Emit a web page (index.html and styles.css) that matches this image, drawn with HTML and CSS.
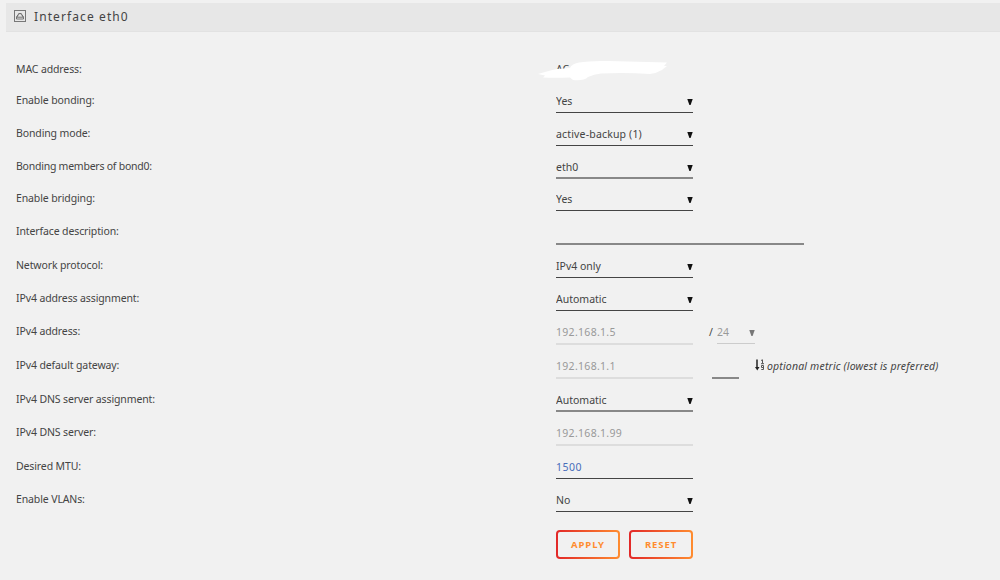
FILE: index.html
```html
<!DOCTYPE html>
<html lang="en">
<head>
    <meta charset="UTF-8">
    <title>Interface eth0</title>
    <link rel="stylesheet" href="styles.css">
</head>
<body>
    <div class="title">
        <svg class="title-icon" viewBox="0 0 12 12" width="12" height="12">
            <rect x="0.5" y="0.5" width="11" height="11" fill="none" stroke="#777"/>
            <path d="M2.500 9V6.500H3.500V5H4.700V3.500H7.300V5H8.500V6.500H9.500V9ZM3 7.200H9" fill="none" stroke="#666" stroke-width="0.900"/>
        </svg>
        <h1>Interface eth0</h1>
    </div>

    <form class="settings">
        <div class="row">
            <span class="label mac-label">MAC address:</span>
            <div class="mac">
                <span>AC</span>
                <svg class="mac-cover" viewBox="0 0 132 22" width="132" height="22">
                    <path d="M0 14L7 12Q14 10 19 9L32 8Q33 4 41 2.500Q52 0.500 70 1L129 2.500L126 6H129L124 10Q119 13 112 14Q88 12.500 63 13.500Q56 14 50 17Q46 21 35 20L32 17.500Q16 18 5 17.500L7 15.500Z" fill="#fff"/>
                </svg>
            </div>
        </div>
        <div class="row">
            <label class="label" for="bonding">Enable bonding:</label>
            <div class="select"><select id="bonding"><option>Yes</option></select></div>
        </div>
        <div class="row">
            <label class="label" for="mode">Bonding mode:</label>
            <div class="select spaced"><select id="mode"><option>active-backup (1)</option></select></div>
        </div>
        <div class="row">
            <label class="label tight" for="members">Bonding members of bond0:</label>
            <div class="select soft"><select id="members"><option>eth0</option></select></div>
        </div>
        <div class="row bridging">
            <label class="label" for="bridging">Enable bridging:</label>
            <div class="select"><select id="bridging"><option>Yes</option></select></div>
        </div>
        <div class="row">
            <label class="label" for="description">Interface description:</label>
            <input class="wide soft" id="description" type="text">
        </div>
        <div class="row">
            <label class="label" for="protocol">Network protocol:</label>
            <div class="select"><select id="protocol"><option>IPv4 only</option></select></div>
        </div>
        <div class="row">
            <label class="label" for="assignment">IPv4 address assignment:</label>
            <div class="select"><select id="assignment"><option>Automatic</option></select></div>
        </div>
        <div class="row">
            <label class="label" for="address">IPv4 address:</label>
            <input id="address" type="text" value="192.168.1.5" disabled>
            <span class="slash">/</span>
            <div class="select mask disabled"><select disabled><option>24</option></select></div>
        </div>
        <div class="row">
            <label class="label" for="gateway">IPv4 default gateway:</label>
            <input id="gateway" type="text" value="192.168.1.1" disabled>
            <input class="metric soft" type="text">
            <svg class="sort-icon" viewBox="0 0 10 12" width="10" height="12">
                <path d="M2 0.500V9" stroke="#222" stroke-width="1.500"/>
                <path d="M0 8h4.500l-2.250 3.500z" fill="#222"/>
                <path d="M6 1.500L7.500 0.800V4.500M6 4.700H9M8.500 8.500H6.500V6.500H8.500V10.500H6.300" fill="none" stroke="#555"/>
            </svg>
            <em class="hint">optional metric (lowest is preferred)</em>
        </div>
        <div class="row">
            <label class="label" for="dns-assignment">IPv4 DNS server assignment:</label>
            <div class="select soft"><select id="dns-assignment"><option>Automatic</option></select></div>
        </div>
        <div class="row">
            <label class="label" for="dns">IPv4 DNS server:</label>
            <input id="dns" type="text" value="192.168.1.99" disabled>
        </div>
        <div class="row">
            <label class="label" for="mtu">Desired MTU:</label>
            <input class="mtu" id="mtu" type="text" value="1500">
        </div>
        <div class="row">
            <label class="label" for="vlans">Enable VLANs:</label>
            <div class="select"><select id="vlans"><option>No</option></select></div>
        </div>
        <div class="buttons">
            <button type="button">Apply</button>
            <button type="reset">Reset</button>
        </div>
    </form>
</body>
</html>
```
FILE: styles.css
```css
* {
    box-sizing: border-box;
}

body {
    margin: 0;
    padding: 3px 0 0 6px;
    height: 580px;
    overflow: hidden;
    background: #f1f1f1;
    color: #444;
    font-family: "Noto Sans", sans-serif;
    font-size: 10.5px;
}

.title {
    display: flex;
    align-items: center;
    height: 29px;
    padding: 0 0 2px 8px;
    background: #e7e7e7;
    border-bottom: 1px solid #e2e2e2;
}

.title-icon {
    margin-right: 8px;
}

.title h1 {
    margin: 0;
    padding-top: 1px;
    font-size: 12px;
    font-weight: normal;
    letter-spacing: 1.1px;
    color: #444;
}

.settings {
    display: grid;
    grid-template-rows: 33px 33px 33px 33px 32px 34px 33px 33px 34px 34px 33px 34px 33px 33px;
    padding: 15px 0 0 10px;
}

.row {
    display: flex;
    align-items: stretch;
}

.label {
    width: 540px;
    padding-top: 12px;
    line-height: 16px;
    letter-spacing: -0.12px;
}

.tight {
    letter-spacing: -0.24px;
}

.mac-label {
    padding-top: 14px;
}

.mac {
    position: relative;
    padding-top: 14px;
    line-height: 16px;
}

.mac-cover {
    position: absolute;
    left: -18px;
    top: 13px;
}

input,
.select {
    width: 137px;
    height: 100%;
    padding: 10px 0 0;
    border: 0;
    border-bottom: 1px solid #444;
    border-radius: 0;
    background: transparent;
    color: #444;
    font: inherit;
}

.select {
    position: relative;
}

.select::after {
    content: "";
    position: absolute;
    right: 0;
    top: 19px;
    width: 6px;
    height: 6px;
    background: #111;
    clip-path: polygon(5% 0, 95% 0, 60% 100%, 40% 100%);
}

select {
    display: block;
    width: 100%;
    height: 22px;
    padding: 0;
    border: 0;
    appearance: none;
    background: transparent;
    color: inherit;
    font: inherit;
    letter-spacing: inherit;
}

.spaced {
    letter-spacing: 0.17px;
}

.soft {
    border-bottom: 2px solid #888;
}

input:disabled {
    border-bottom: 2px solid #ddd;
    color: #999;
    letter-spacing: 0.3px;
}

.disabled {
    border-bottom-color: #ccc;
    color: #999;
}

.disabled::after {
    background: #777;
}

select:disabled {
    opacity: 1;
}

.bridging .label {
    padding-top: 11px;
}

.bridging .select {
    padding-top: 9px;
}

.bridging .select::after {
    top: 18px;
}

.wide {
    width: 248px;
}

.slash {
    width: 8px;
    margin-left: 16px;
    padding-top: 13px;
    line-height: 16px;
}

.mask {
    width: 38px;
    height: 33px;
}

.metric {
    width: 27px;
    margin-left: 19px;
}

.sort-icon {
    margin: 14px 2px 0 16px;
}

.hint {
    padding-top: 13px;
    line-height: 16px;
    letter-spacing: 0.17px;
}

.mtu {
    color: #486dba;
    letter-spacing: 0.5px;
}

.buttons {
    display: flex;
    gap: 9px;
    padding: 18px 0 0 540px;
}

button {
    width: 64px;
    height: 29px;
    padding: 0;
    border: 2px solid transparent;
    border-radius: 4px;
    background: linear-gradient(#f1f1f1, #f1f1f1) padding-box, linear-gradient(90deg, #e22828, #ff8c2f) border-box;
    color: #ff8c2f;
    font: bold 9.5px "Noto Sans", sans-serif;
    letter-spacing: 0.9px;
    text-transform: uppercase;
}
```
